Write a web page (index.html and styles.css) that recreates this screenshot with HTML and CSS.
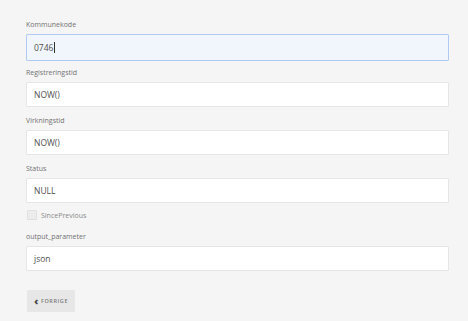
FILE: index.html
```html
<!DOCTYPE html>
<html lang="no">
<head>
  <meta charset="UTF-8" />
  <title>Parametere</title>
  <link rel="stylesheet" href="styles.css">
</head>
<body>
  <form class="param-form">
    <div class="field">
      <label class="field-label">Kommunekode</label>
      <div class="field-input is-focused">0746<span class="caret"></span></div>
    </div>
    <div class="field">
      <label class="field-label">Registreringstid</label>
      <div class="field-input">NOW()</div>
    </div>
    <div class="field">
      <label class="field-label">Virkningstid</label>
      <div class="field-input">NOW()</div>
    </div>
    <div class="field">
      <label class="field-label">Status</label>
      <div class="field-input">NULL</div>
    </div>

    <div class="check-row">
      <span class="check-box"></span>
      <span class="check-label">SincePrevious</span>
    </div>

    <div class="field">
      <label class="field-label">output_parameter</label>
      <div class="field-input">json</div>
    </div>

    <div class="actions">
      <button type="button" class="back-button"><span class="chev">&#8249;</span> FORRIGE</button>
    </div>
  </form>
</body>
</html>
```

FILE: styles.css
```css
:root {
  --bg: #f5f5f5;
  --label: #727272;
  --text: #505050;
  --border: #e6e6e6;
  --focus-bg: #f0f6fb;
  --focus-border: #b0cbf3;
}

body {
  margin: 0;
  padding: 20px 19px 0 26px;
  background: var(--bg);
  font-family: 'Open Sans', 'Liberation Sans', sans-serif;
  color: var(--text);
}

.param-form {
  display: flex;
  flex-direction: column;
}

.field {
  display: flex;
  flex-direction: column;
  margin-bottom: 9px;
}

.field-label {
  font-size: 7px;
  line-height: 10px;
  height: 10px;
  color: var(--label);
  margin-bottom: 4px;
}

.field-input {
  box-sizing: border-box;
  height: 25px;
  padding: 0 7px;
  display: flex;
  align-items: center;
  background: #fff;
  border: 1px solid var(--border);
  border-radius: 1px;
  font-size: 8.5px;
  color: var(--text);
}

.field-input.is-focused {
  background: var(--focus-bg);
  border: 1.5px solid var(--focus-border);
  height: 27px;
  margin-bottom: -2px;
}

.caret {
  display: inline-block;
  width: 1px;
  height: 11px;
  background: #333;
  margin-left: 1px;
}

.check-row {
  display: flex;
  align-items: center;
  gap: 4px;
  height: 10px;
  margin: -2px 0 12px 1px;
}

.check-box {
  box-sizing: border-box;
  width: 10px;
  height: 10px;
  background: #ececec;
  border: 1px solid #e0e0e0;
  border-radius: 1px;
}

.check-label {
  font-size: 7px;
  color: #8a8a8a;
}

.actions {
  margin-top: 10px;
}

.back-button {
  box-sizing: border-box;
  width: 48px;
  height: 22px;
  margin-left: 1px;
  padding: 0;
  border: none;
  border-radius: 1px;
  background: #e7e7e7;
  color: #7a7a7a;
  font-family: inherit;
  font-size: 5.5px;
  font-weight: 600;
  letter-spacing: 0.6px;
  display: flex;
  align-items: center;
  justify-content: center;
  gap: 2px;
}

.chev {
  font-size: 11px;
  font-weight: 800;
  color: #4a4a4a;
  line-height: 1;
  margin-top: -2px;
}
```
